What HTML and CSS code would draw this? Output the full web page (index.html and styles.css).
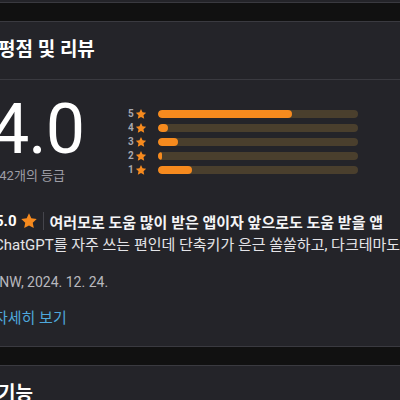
FILE: index.html
```html
<!DOCTYPE html>
<html lang="ko">
<head>
<meta charset="utf-8">
<link rel="stylesheet" href="styles.css">
</head>
<body>
<div class="page">
  <div class="card card-top"></div>
  <div class="band"></div>
  <section class="card">
    <h2 class="heading">평점 및 리뷰</h2>
    <div class="summary">
      <div class="score">
        <div class="big">4.0</div>
        <div class="count">142개의 등급</div>
      </div>
      <div class="bars">
        <div class="bar-row"><span class="num">5</span><svg class="star-s" viewBox="0 0 24 24"><path d="M12 1.8l3.1 6.6 7.2.9-5.3 5 1.4 7.1L12 17.9l-6.4 3.5L7 14.3 1.7 9.3l7.2-.9z"/></svg><div class="track"><div class="fill" style="width:67%"></div></div></div>
        <div class="bar-row"><span class="num">4</span><svg class="star-s" viewBox="0 0 24 24"><path d="M12 1.8l3.1 6.6 7.2.9-5.3 5 1.4 7.1L12 17.9l-6.4 3.5L7 14.3 1.7 9.3l7.2-.9z"/></svg><div class="track"><div class="fill" style="width:5%"></div></div></div>
        <div class="bar-row"><span class="num">3</span><svg class="star-s" viewBox="0 0 24 24"><path d="M12 1.8l3.1 6.6 7.2.9-5.3 5 1.4 7.1L12 17.9l-6.4 3.5L7 14.3 1.7 9.3l7.2-.9z"/></svg><div class="track"><div class="fill" style="width:10%"></div></div></div>
        <div class="bar-row"><span class="num">2</span><svg class="star-s" viewBox="0 0 24 24"><path d="M12 1.8l3.1 6.6 7.2.9-5.3 5 1.4 7.1L12 17.9l-6.4 3.5L7 14.3 1.7 9.3l7.2-.9z"/></svg><div class="track"><div class="fill" style="width:2%"></div></div></div>
        <div class="bar-row"><span class="num">1</span><svg class="star-s" viewBox="0 0 24 24"><path d="M12 1.8l3.1 6.6 7.2.9-5.3 5 1.4 7.1L12 17.9l-6.4 3.5L7 14.3 1.7 9.3l7.2-.9z"/></svg><div class="track"><div class="fill" style="width:17%"></div></div></div>
      </div>
    </div>
    <div class="review">
      <div class="review-head">
        <span class="r-score">5.0</span>
        <svg class="star-l" viewBox="0 0 24 24"><path d="M12 1.8l3.1 6.6 7.2.9-5.3 5 1.4 7.1L12 17.9l-6.4 3.5L7 14.3 1.7 9.3l7.2-.9z"/></svg>
        <span class="sep"></span>
        <span class="r-title">여러모로 도움 많이 받은 앱이자 앞으로도 도움 받을 앱</span>
      </div>
      <p class="r-body">ChatGPT를 자주 쓰는 편인데 단축키가 은근 쏠쏠하고, 다크테마도 지원해서 좋아요</p>
      <p class="r-meta">SNW, 2024. 12. 24.</p>
      <a class="more">자세히 보기</a>
    </div>
  </section>
  <div class="band"></div>
  <section class="card">
    <h2 class="heading">기능</h2>
  </section>
</div>
</body>
</html>
```
FILE: styles.css
```css
html, body {
  margin: 0;
  padding: 0;
  background: #111111;
  overflow: hidden;
}
body {
  width: 400px;
  height: 400px;
  font-family: Roboto, "Noto Sans CJK KR", sans-serif;
  color: #f2f2f4;
}
.page {
  width: 420px;
  margin-left: -8px;
}
.card {
  background: #242429;
  border-top: 1px solid #3a3a40;
  border-bottom: 1px solid #3a3a40;
  padding-left: 6px;
}
.card-top {
  height: 2px;
  border-top: 0;
}
.band {
  height: 18px;
  background: #111111;
}
.heading {
  margin: 0 0 0 -6px;
  padding: 17px 0 18px 6px;
  font-size: 19px;
  line-height: 22px;
  font-weight: 700;
  color: #ffffff;
  border-bottom: 1px solid #3a3a40;
}
.summary {
  display: flex;
  padding-top: 14px;
}
.score {
  width: 138px;
  margin-left: -8px;
}
.big {
  font-size: 70px;
  line-height: 70px;
  font-weight: 400;
  color: #ffffff;
  letter-spacing: -1px;
}
.count {
  margin: 4px 0 0 2px;
  font-size: 13px;
  line-height: 16px;
  color: #9e9ea6;
}
.bars {
  width: 230px;
  padding-top: 16px;
  display: flex;
  flex-direction: column;
  gap: 6px;
}
.bar-row {
  display: flex;
  align-items: center;
  height: 8px;
}
.num {
  width: 7px;
  font-size: 10px;
  line-height: 8px;
  color: #a8a8b0;
  font-weight: 700;
}
.star-s {
  width: 12px;
  height: 12px;
  fill: #f68a1e;
}
.track {
  flex: 1;
  height: 8px;
  margin-left: 11px;
  border-radius: 4px;
  background: #4a3f2d;
  overflow: hidden;
}
.fill {
  height: 100%;
  background: #f68a1e;
  border-radius: 4px;
}
.review {
  padding-top: 27px;
  padding-bottom: 18px;
}
.review-head {
  display: flex;
  align-items: center;
  height: 20px;
  margin-left: -3px;
}
.r-score {
  font-size: 15px;
  font-weight: 700;
  color: #ffffff;
}
.star-l {
  width: 18px;
  height: 18px;
  fill: #f68a1e;
  margin-left: 3px;
}
.sep {
  width: 1px;
  height: 18px;
  background: #45454c;
  margin: 0 6px 0 5px;
}
.r-title {
  font-size: 15px;
  font-weight: 700;
  color: #f4f4f6;
  white-space: nowrap;
}
.r-body {
  margin: 4px 0 0 -4px;
  font-size: 15px;
  line-height: 20px;
  color: #e4e4e8;
  white-space: nowrap;
}
.r-meta {
  margin: 18px 0 0 -7px;
  font-size: 14px;
  line-height: 18px;
  color: #b8b8be;
}
.more {
  display: block;
  margin: 17px 0 0 -4px;
  font-size: 15px;
  line-height: 20px;
  color: #4ea8dc;
}
```
